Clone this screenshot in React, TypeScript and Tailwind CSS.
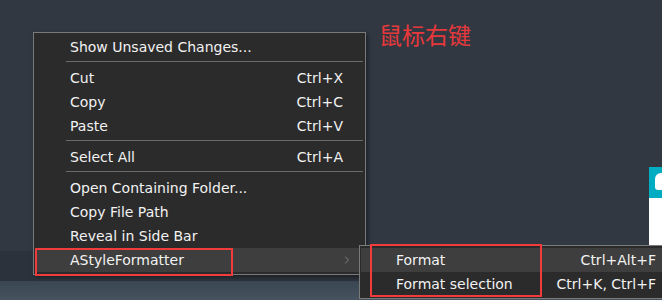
import { ChevronRight } from 'lucide-react'

type Item = { label: string; shortcut?: string; hover?: boolean; submenu?: boolean }

const groups: Item[][] = [
  [{ label: 'Show Unsaved Changes...' }],
  [
    { label: 'Cut', shortcut: 'Ctrl+X' },
    { label: 'Copy', shortcut: 'Ctrl+C' },
    { label: 'Paste', shortcut: 'Ctrl+V' },
  ],
  [{ label: 'Select All', shortcut: 'Ctrl+A' }],
  [
    { label: 'Open Containing Folder...' },
    { label: 'Copy File Path' },
    { label: 'Reveal in Side Bar' },
    { label: 'AStyleFormatter', hover: true, submenu: true },
  ],
]

const subItems: Item[] = [
  { label: 'Format', shortcut: 'Ctrl+Alt+F', hover: true },
  { label: 'Format selection', shortcut: 'Ctrl+K, Ctrl+F' },
]

function MenuRow({ item }: { item: Item }) {
  return (
    <div
      className={`mx-px flex h-6 items-center pl-[35px] pr-[21px] ${item.hover ? 'bg-[#3e3e3e]' : ''}`}
    >
      <span className="flex-1 whitespace-nowrap">{item.label}</span>
      {item.shortcut && <span className="whitespace-nowrap">{item.shortcut}</span>}
      {item.submenu && (
        <ChevronRight size={12} strokeWidth={1.5} className="-mr-[10px] text-[#9a9a9a]" />
      )}
    </div>
  )
}

export default function App() {
  return (
    <div
      className="relative h-[300px] w-[662px] overflow-hidden text-[14px] text-[#f2f2f2]"
      style={{ fontFamily: '"DejaVu Sans", "Noto Sans CJK SC", sans-serif' }}
    >
      {/* editor background */}
      <div className="flex h-full flex-col">
        <div className="h-[251px] bg-[#313842]" />
        <div className="h-[30px] bg-[#2c323b]" />
        <div className="flex-1 bg-gradient-to-b from-[#3a4651] to-[#46535e]" />
      </div>

      {/* side widget on the right edge */}
      <div className="absolute left-[649px] top-[167px] flex h-[90px] w-[13px] flex-col">
        <div className="flex h-[31px] items-start bg-[#00acc1] pl-[6px] pt-[6px]">
          <div className="h-[17px] w-[10px] rounded-tl-[6px] rounded-bl-[3px] bg-white" />
        </div>
        <div className="flex-1 bg-white" />
      </div>

      <div
        className="absolute left-[379px] top-[17px] text-[23px] text-[#e8383b]"
        style={{ fontFamily: '"Noto Sans CJK SC", sans-serif' }}
      >
        鼠标右键
      </div>

      {/* main context menu */}
      <div className="absolute left-[33px] top-[32px] w-[333px] border border-[#7a7a7a] bg-[#2b2b2b] pb-[2px] pt-[2px] shadow-[2px_2px_4px_rgba(0,0,0,0.4)]">
        {groups.map((g, gi) => (
          <div key={gi}>
            {gi > 0 && (
              <div className="pb-[4px] pt-[2px] pl-[32px] pr-[2px]">
                <div className="h-px bg-[#6b6b6b]" />
              </div>
            )}
            {g.map(item => (
              <MenuRow key={item.label} item={item} />
            ))}
          </div>
        ))}
      </div>

      <div className="absolute left-[35px] top-[248px] h-[28px] w-[198px] border-2 border-[#f23b3b]" />

      {/* submenu */}
      <div className="absolute left-[359px] top-[245px] w-[320px] border border-[#7a7a7a] bg-[#2b2b2b] pb-[2px] pt-[2px]">
        {subItems.map(item => (
          <MenuRow key={item.label} item={item} />
        ))}
      </div>

      <div className="absolute left-[370px] top-[244px] h-[53px] w-[172px] border-2 border-[#f23b3b]" />
    </div>
  )
}
